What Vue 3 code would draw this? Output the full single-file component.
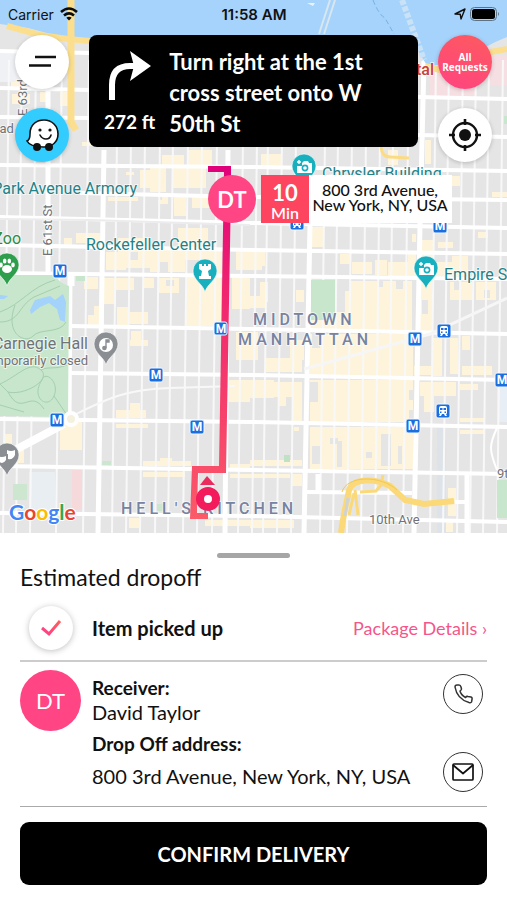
<!--
    Экран курьера: карта с маршрутом, подсказка поворота
    и нижняя панель с данными получателя
-->

<template>
  <div class="delivery-screen">
    <div class="map-area">
      <svg class="map" viewBox="0 0 507 533" preserveAspectRatio="xMidYMin slice">
        <defs>
          <linearGradient id="routeFill" x1="0" y1="0" x2="0" y2="1">
            <stop offset="0" stop-color="#e0007a" />
            <stop offset="0.35" stop-color="#f0246f" />
            <stop offset="1" stop-color="#fb5a68" />
          </linearGradient>
        </defs>

        <!-- Кварталы -->
        <rect width="507" height="533" fill="#e5e5e6" />
        <rect v-for="(b, i) in blocks" :key="'b' + i" :x="b[0]" :y="b[1]" :width="b[2]" :height="b[3]" fill="#fdf4db" />
        <rect v-for="(b, i) in shadows" :key="'s' + i" :x="b[0]" :y="b[1]" :width="b[2]" :height="b[3]" fill="#e5e5e6" />
        <rect x="0" y="52" width="26" height="30" fill="#f0f1f4" />
        <rect x="430" y="66" width="45" height="30" fill="#f6dfe2" />
        <rect x="488" y="55" width="19" height="30" fill="#f6dfe2" />
        <rect x="72" y="470" width="10" height="40" fill="#f6dadb" />
        <rect x="29" y="472" width="26" height="44" fill="#e9eef2" />
        <rect x="437" y="424" width="9" height="109" fill="#dde3e8" />
        <rect x="497" y="384" width="10" height="38" fill="#e8eef6" />

        <!-- Улицы -->
        <path :d="minorStreets" stroke="#f8f8f9" stroke-width="2" fill="none" />
        <path :d="majorStreets" stroke="#ffffff" stroke-width="5" fill="none" />
        <path :d="avenues" stroke="#ffffff" stroke-width="4" fill="none" />
        <path d="M0 219 L90 220 L250 225" stroke="#ececee" stroke-width="2" fill="none" />
        <path d="M304 369 L430 334 L507 298" stroke="#f6f6f6" stroke-width="3" fill="none" />
        <path d="M72 416 C105 400 125 389 170 388 L235 386" stroke="#f8f8f8" stroke-width="2" fill="none" />
        <path d="M0 458 L64 424" stroke="#ffffff" stroke-width="8" />
        <path d="M497 428 C489 445 489 450 497 470" stroke="#ffffff" stroke-width="2" fill="none" />

        <!-- Парки -->
        <path d="M0 275 L55 275 Q59 283 69 286 L68 417 L0 416Z" fill="#c7e6cc" />
        <g stroke="#a5cfae" fill="none">
          <path d="M0 312 C22 304 30 287 55 280 M0 322 C20 322 18 306 34 297 L60 286 M15 305 C4 335 26 344 33 336 S60 334 66 322" />
          <path d="M0 384 C18 376 30 360 41 370 S24 396 8 392 Z M41 370 C48 366 55 370 67 365 M42 380 C30 398 48 410 54 396 S45 370 42 380 M8 392 C22 418 30 388 44 409 M54 396 L67 415 M0 405 L24 412" />
        </g>
        <path d="M30 310 L35 300 L50 296 L55 300 L63 294 L66 302 L65 322 L60 320 L57 309 L49 303 L40 307 L31 314Z" fill="#a3d2fa" />
        <path d="M0 295 L8 296 L4 299 L0 299Z" fill="#a3d2fa" />
        <rect x="311" y="280" width="24" height="40" fill="#c7e6cc" />
        <rect x="76" y="276" width="9" height="5" fill="#c7e6cc" />
        <rect x="497" y="480" width="10" height="38" fill="#c7e6cc" />
        <rect x="504" y="116" width="3" height="8" fill="#c7e6cc" />
        <rect x="13" y="484" width="14" height="16" fill="#cce6cf" />
        <rect x="102" y="461" width="9" height="4" fill="#cce6cf" />
        <rect x="284" y="455" width="6" height="7" fill="#bfe2c4" />
        <rect x="157" y="504" width="6" height="7" fill="#cce6cf" />

        <!-- Вода -->
        <path d="M0 0 H507 V37 Q484 46 470 58 L428 67 L415 46 L90 42 L58 36 L28 28 L0 24Z" fill="#a5d3fb" />
        <path d="M330 0 L319 34 M335 0 L324 34" stroke="#d8e6ef" stroke-width="2" />
        <path d="M402 0 L424 60" stroke="#c9e2f6" stroke-width="6" stroke-dasharray="5 2" />
        <path d="M373 0 Q379 15 385 18 L394 34" stroke="#7ab0e2" stroke-dasharray="5 3" fill="none" />
        <path d="M307 3 L315 3 L313 6Z" fill="#edf1f3" />
        <g fill="none" stroke="#fbdf8e">
          <path d="M71 0 V122 L76 130" stroke-width="7" />
          <path d="M7 26 L40 35 L68 39 L90 41" stroke-width="6" />
          <path d="M425 66 L440 70 L480 54 L507 49" stroke-width="6" />
          <path d="M381 147 Q382 157 390 157 L409 158" stroke-width="3" stroke="#fbdc84" />
        </g>

        <!-- Развязка у тоннеля -->
        <g fill="none" stroke="#fbd978">
          <path d="M341 533 C344 510 347 502 349 490 C353 478 375 478 390 486 L405 500 L424 504 L454 501" stroke-width="6" />
          <path d="M358 515 L355 490 M349 515 L354 493 M383 475 L381 485 L376 491 L360 492" stroke-width="3" />
        </g>
        <path d="M345 516 L348 498" stroke="#d0d3d3" stroke-width="3" />
        <path d="M342 492 C347 475 381 475 397 490" stroke="#f2c850" fill="none" />
        <circle cx="71" cy="419" r="6" fill="#f5f1df" stroke="#ffffff" stroke-width="4" />

        <!-- Подписи -->
        <g class="map-text">
          <g class="place">
            <text class="edge" x="137" y="194">Park Avenue Armory</text>
            <text x="86" y="250">Rockefeller Center</text>
            <text x="322" y="179">Chrysler Building</text>
            <text x="444" y="280">Empire State Building</text>
          </g>
          <text class="zoo edge" x="21" y="244">Zoo</text>
          <text class="station edge" x="434" y="75">Hospital</text>
          <text class="hall edge" x="88" y="349">Carnegie Hall</text>
          <text class="note edge" x="88" y="365">Temporarily closed</text>
          <text class="street" x="-16" y="133">Road Ave</text>
          <text class="street" x="369" y="524">10th Ave</text>
          <text class="street" x="497" y="478">9th Ave</text>
          <text class="street" transform="translate(52 256) rotate(-90)">E 61st St</text>
          <text class="street" transform="translate(27 116) rotate(-90)">E 63rd St</text>
          <text class="district" x="253" y="325">MIDTOWN</text>
          <text class="district" x="238" y="345">MANHATTAN</text>
          <text class="district" x="121" y="514">HELL'S KITCHEN</text>
        </g>

        <!-- Станции метро и вокзалы -->
        <g v-for="(m, i) in metro" :key="'m' + i" :transform="`translate(${m[0]} ${m[1]})`">
          <rect x="-7" y="-7" width="14" height="14" rx="2" fill="#1a6fe0" stroke="#f2f6fc" />
          <text class="metro-letter" y="4">M</text>
        </g>
        <g v-for="(t, i) in trains" :key="'t' + i" :transform="`translate(${t[0]} ${t[1]})`">
          <rect x="-7" y="-7" width="14" height="14" rx="2" fill="#1a6fe0" stroke="#f2f6fc" />
          <path d="M-4 -3 Q-4 -5 -2 -5 H2 Q4 -5 4 -3 V2 Q4 3 3 3 L4 5 H2 L1 3 H-1 L-2 5 H-4 L-3 3 Q-4 3 -4 2Z" fill="#ffffff" />
          <path d="M-3 -3 H-0.5 V-1 H-3Z M0.5 -3 H3 V-1 H0.5Z M-3 0.5 H-1.5 V2 H-3Z M1.5 0.5 H3 V2 H1.5Z" fill="#1a6fe0" />
        </g>

        <!-- Метки мест -->
        <g v-for="(p, i) in pins" :key="'p' + i" :transform="`translate(${p.x} ${p.y})`">
          <path d="M0 20 C-2 12 -12 8 -12 -1 A12 12 0 0 1 12 -1 C12 8 2 12 0 20Z" :fill="p.color" stroke="#ffffff" stroke-opacity="0.6" />
          <path v-if="p.icon === 'rook'" d="M-6 -8 H-3 V-6 H-1 V-8 H1 V-6 H3 V-8 H6 V-3 L3 -1 L4 4 H6 V7 H-6 V4 H-4 L-3 -1 L-6 -3Z" fill="#ffffff" />
          <g v-else-if="p.icon === 'camera'">
            <path d="M-7 -1 H-2 V-4 L0 -6 H4 L5 -4 H8 V6 H-7Z" fill="#ffffff" />
            <circle cx="1" cy="1" r="2.6" fill="none" :stroke="p.color" stroke-width="1.6" />
            <path d="M-5 -7 V-3 M-7 -5 H-3" stroke="#ffffff" stroke-width="1.4" />
          </g>
          <g v-else-if="p.icon === 'paw'" fill="#ffffff">
            <ellipse cy="3" rx="5" ry="4" />
            <ellipse cx="-6" cy="-1" rx="1.8" ry="2.4" />
            <ellipse cx="-2.3" cy="-5" rx="1.8" ry="2.6" />
            <ellipse cx="2.3" cy="-5" rx="1.8" ry="2.6" />
            <ellipse cx="6" cy="-1" rx="1.8" ry="2.4" />
          </g>
          <g v-else-if="p.icon === 'note'">
            <circle r="7" fill="#ffffff" />
            <path d="M0 3 V-5 H3 V-3 H0" :stroke="p.color" :fill="p.color" stroke-width="1.4" />
            <circle cx="-1.600" cy="3" r="2.300" :fill="p.color" />
          </g>
          <path v-else d="M-9 0 Q-5 2 -1 0 V4 Q-5 10 -9 4Z M0 -6 Q4 -4 8 -6 V-1 Q6 4 1 3 L1 -2 H0Z" fill="#ffffff" />
        </g>

        <!-- Логотип карты -->
        <text class="map-logo" x="9" y="520"><tspan fill="#4285f4">G</tspan><tspan fill="#ea4335">o</tspan><tspan fill="#fbbc05">o</tspan><tspan fill="#4285f4">g</tspan><tspan fill="#34a853">l</tspan><tspan fill="#ea4335">e</tspan></text>

        <!-- Маршрут -->
        <path d="M208 166 H231 V190 L226 473 H198 L197 513 H208 V519 H190 L192 466 H219 L224 172 H208Z" fill="url(#routeFill)" />
        <rect x="214" y="322" width="13" height="13" rx="2" fill="#1a6fe0" stroke="#f2f6fc" />
        <text class="metro-letter" x="221" y="333">M</text>
        <path d="M200 485 L207 476 L215 485Z" fill="#e92b5e" />
        <circle cx="208" cy="499" r="8" fill="#ffffff" stroke="#f31b5b" stroke-width="8" />

        <!-- Точка доставки -->
        <circle cx="232" cy="199" r="24" fill="#ff4583" />
        <text class="pin-initials" x="232" y="208">DT</text>
        <rect x="261" y="175" width="48" height="48" fill="#fd4560" />
        <rect x="309" y="175" width="143" height="48" fill="#ffffff" />
        <text class="eta-value" x="285" y="201">10</text>
        <text class="eta-unit" x="285" y="219">Min</text>
        <text class="pin-address" x="380" y="196">800 3rd Avenue,</text>
        <text class="pin-address" x="380" y="211">New York, NY, USA</text>
      </svg>

      <div class="status-bar">
        <div class="status-left">
          <span>Carrier</span>
          <svg width="18" height="14" viewBox="0 0 18 14" fill="none" stroke="#0b0b0b" stroke-width="2.6">
            <path d="M1 5 Q9 -2 17 5" />
            <path d="M4 8.5 Q9 4.300 14 8.500" />
            <path d="M9 13.500 L6.300 10.700 Q9 8.700 11.700 10.700Z" fill="#0b0b0b" stroke="none" />
          </svg>
        </div>
        <span class="status-time">11:58 AM</span>
        <div class="status-right">
          <svg width="12" height="12" viewBox="0 0 12 12">
            <path d="M1 6 L11 1 L7 11 L6.200 6.200Z" fill="none" stroke="#111111" stroke-width="1.4" stroke-linejoin="round" />
          </svg>
          <svg width="30" height="14" viewBox="0 0 30 14">
            <rect x="0.5" y="0.500" width="26" height="13" rx="4" fill="none" stroke="#5c7285" />
            <rect x="2" y="2" width="23" height="10" rx="2.500" fill="#000000" />
            <path d="M28 5 Q30 7 28 9Z" fill="#5c7285" />
          </svg>
        </div>
      </div>

      <div class="map-controls">
        <div class="control-column">
          <button class="round-button" aria-label="Menu">
            <svg width="54" height="54" viewBox="0 0 54 54" stroke="#111111" stroke-width="2.600">
              <path d="M20 22 H41 M14 30.500 H36" />
            </svg>
          </button>
          <button class="round-button waze" aria-label="Waze">
            <svg width="54" height="54" viewBox="0 0 54 54">
              <path d="M12 33 Q15 32 15 26 C15 16 22 12 29 12 C37 12 43 18 43 26 C43 34 37 39 29 39 C20 39 14 37 12 33Z" fill="#ffffff" stroke="#111111" stroke-width="1.600" />
              <circle cx="22" cy="39" r="4" fill="#111111" />
              <circle cx="34" cy="39" r="4" fill="#111111" />
              <circle cx="25" cy="22" r="1.600" fill="#111111" />
              <circle cx="35" cy="22" r="1.600" fill="#111111" />
              <path d="M25 27 Q27 31 31 31 Q35 31 36 27" fill="none" stroke="#111111" stroke-width="1.600" stroke-linecap="round" />
            </svg>
          </button>
        </div>

        <div class="turn-card">
          <div class="turn-side">
            <svg width="48" height="56" viewBox="0 0 48 56">
              <path d="M6 52 V37 Q6 18 24 18 H32" fill="none" stroke="#ffffff" stroke-width="6" />
              <path d="M24 3 L45 18 L24 33 L28 18Z" fill="#ffffff" />
            </svg>
            <span class="turn-distance">272 ft</span>
          </div>
          <p class="turn-text">Turn right at the 1st cross street onto W 50th St</p>
        </div>

        <div class="control-column">
          <button class="round-button requests">All<br />Requests</button>
          <button class="round-button" aria-label="My location">
            <svg width="54" height="54" viewBox="0 0 54 54">
              <circle cx="27" cy="27" r="12" fill="none" stroke="#111111" stroke-width="2.400" />
              <circle cx="27" cy="27" r="6" fill="#111111" />
              <path d="M27 11 V17 M27 37 V43 M11 27 H17 M37 27 H43" stroke="#111111" stroke-width="2.600" />
            </svg>
          </button>
        </div>
      </div>
    </div>

    <!-- Нижняя панель -->
    <div class="sheet">
      <div class="sheet-handle"></div>
      <h2 class="sheet-title">Estimated dropoff</h2>

      <div class="status-row">
        <div class="check-circle">
          <svg width="22" height="18" viewBox="0 0 22 18">
            <defs>
              <linearGradient id="checkFill" x1="0" y1="1" x2="1" y2="0">
                <stop offset="0" stop-color="#ff3d8b" />
                <stop offset="1" stop-color="#fd5f5b" />
              </linearGradient>
            </defs>
            <path d="M2 9 L9 15 L20 2" fill="none" stroke="url(#checkFill)" stroke-width="3" />
          </svg>
        </div>
        <span class="status-name">Item picked up</span>
        <a class="details-link" href="#">Package Details ›</a>
      </div>

      <div class="receiver-block">
        <div class="avatar">DT</div>
        <div class="receiver-info">
          <span class="info-label">Receiver:</span>
          <span class="info-value">David Taylor</span>
          <span class="info-label address-label">Drop Off address:</span>
          <span class="info-value address-value">800 3rd Avenue, New York, NY, USA</span>
        </div>
        <div class="contact-column">
          <button class="contact-button" aria-label="Call">
            <svg width="40" height="40" viewBox="0 0 40 40" fill="none" stroke="#333333" stroke-width="1.500" stroke-linejoin="round">
              <path d="M12 13 Q12 11 14 11 H16 Q17.500 11 18 13 L18.500 15 Q18.500 16 17 17 Q18 21 22.500 23.500 Q23.500 22 25 22.500 L28 23 Q29.500 23.500 29 25.500 L28.500 28 Q28 29 26 28.500 Q14 25 12 13Z" />
            </svg>
          </button>
          <button class="contact-button mail" aria-label="Message">
            <svg width="40" height="40" viewBox="0 0 40 40" fill="none" stroke="#111111" stroke-width="1.700" stroke-linejoin="round">
              <rect x="10" y="12" width="20" height="16" rx="1" />
              <path d="M10 13 L20 21.500 L30 13" />
            </svg>
          </button>
        </div>
      </div>

      <button class="confirm-button">CONFIRM DELIVERY</button>
    </div>
  </div>
</template>

<script setup>
// Жёлтые участки застройки: x, y, ширина, высота
const blocks = [
  [11, 80, 16, 7], [12, 94, 18, 10], [40, 92, 10, 10], [60, 92, 8, 14], [82, 142, 10, 4],
  [162, 155, 22, 10], [188, 150, 24, 16], [126, 172, 8, 3], [140, 170, 26, 18], [150, 165, 16, 27], [172, 168, 34, 20],
  [108, 197, 30, 4], [158, 196, 10, 8], [174, 196, 12, 20], [192, 196, 22, 12],
  [64, 238, 8, 10], [76, 233, 24, 10], [106, 252, 20, 18], [118, 238, 32, 30], [150, 250, 35, 22],
  [178, 228, 30, 32], [206, 250, 16, 24], [84, 277, 14, 12], [102, 278, 14, 26], [116, 278, 18, 12],
  [144, 278, 10, 10], [159, 278, 20, 15], [88, 315, 16, 10], [94, 306, 8, 18], [117, 307, 12, 18], [128, 312, 20, 12],
  [186, 277, 35, 49], [232, 277, 18, 32], [236, 252, 26, 18], [131, 331, 10, 15], [130, 340, 18, 6],
  [236, 332, 22, 28], [228, 380, 22, 22], [250, 380, 24, 18], [116, 410, 30, 8], [130, 403, 10, 15], [116, 424, 32, 4],
  [60, 422, 22, 28], [4, 434, 8, 10], [18, 446, 6, 17], [143, 461, 48, 5], [160, 458, 12, 8], [143, 472, 42, 5],
  [129, 518, 10, 10], [205, 520, 55, 6], [230, 464, 20, 6], [230, 474, 24, 4],
  [261, 154, 20, 12], [388, 150, 10, 15], [425, 140, 6, 24], [446, 176, 14, 10], [492, 192, 15, 5],
  [312, 227, 12, 20], [412, 234, 4, 8], [438, 242, 15, 6], [478, 232, 10, 6], [255, 252, 10, 14], [340, 254, 10, 10],
  [352, 262, 20, 12], [375, 260, 12, 15], [388, 262, 24, 14], [408, 254, 8, 22], [422, 240, 12, 20], [420, 262, 40, 14], [452, 256, 16, 20],
  [345, 281, 67, 49], [420, 281, 12, 50], [296, 290, 8, 12], [260, 282, 8, 20], [450, 282, 22, 18], [476, 282, 20, 18], [250, 296, 16, 12],
  [310, 312, 36, 18], [310, 334, 103, 42], [266, 358, 36, 14], [290, 340, 14, 20], [432, 338, 10, 38], [450, 338, 8, 36], [462, 336, 8, 14], [462, 366, 30, 9],
  [266, 382, 36, 15], [278, 382, 8, 24], [292, 382, 10, 40], [310, 380, 103, 42], [420, 382, 36, 14], [424, 396, 10, 16], [460, 384, 18, 6],
  [310, 427, 103, 42], [294, 427, 5, 4], [460, 418, 24, 4], [460, 430, 24, 4], [250, 460, 52, 6], [250, 474, 40, 4], [292, 474, 10, 12],
  [250, 520, 44, 8], [448, 488, 8, 28], [438, 522, 15, 10], [414, 366, 20, 9],
]

// Серые вырезы внутри жёлтых участков
const shadows = [
  [158, 196, 4, 4], [130, 252, 8, 8], [160, 262, 8, 10], [166, 280, 8, 6], [345, 281, 6, 10], [378, 281, 5, 6], [396, 281, 7, 8],
  [312, 334, 8, 14], [346, 334, 4, 8], [310, 382, 8, 20], [409, 390, 5, 10], [409, 410, 5, 12],
  [337, 441, 5, 26], [381, 434, 10, 32], [312, 446, 8, 18], [330, 438, 8, 6], [398, 446, 4, 18], [366, 452, 6, 6],
  [454, 282, 6, 8], [484, 290, 6, 8], [422, 300, 6, 14],
]

const minorX = [
  3, 16, 30, 56, 83, 112, 126, 140, 155, 168, 183, 197, 212, 238, 252, 263, 277, 291,
  320, 333, 347, 361, 375, 388, 403, 430, 443, 457, 470, 483, 497,
]
const minorStreets = minorX.map((x) => `M${x} 533 L${x + 6} 60`).join(' ')

const majorStreets = [
  'M98 533 L104 150', 'M70 275 L69 420', 'M48 60 L48 275', 'M225 533 L228 150',
  'M304 533 L310 225', 'M414 533 L420 225 L424 60', 'M467 472 V533', 'M318 474 V492', 'M72 275 V286',
].join(' ')

const avenues = [
  'M0 51 L90 53', 'M418 97 L507 99', 'M0 88 L90 90', 'M418 135 L507 137', 'M0 117 L90 118',
  'M0 165 L250 167 L507 171', 'M80 193 L250 197 L507 200', 'M0 217 L250 223 L507 228',
  'M0 245 L250 250 L507 254', 'M0 273 L250 276 L507 279', 'M70 326 L250 329 L507 334',
  'M70 373 L250 375 L507 380', 'M0 419 L250 422 L507 427', 'M0 466 L250 470 L507 474',
  'M0 513 L250 516 L507 522', 'M305 492 L412 493', 'M455 502 H466',
].join(' ')

const metro = [
  [60, 271], [156, 375], [197, 427], [57, 420], [440, 226], [415, 339], [413, 426], [502, 380],
]
const trains = [[444, 331], [443, 411], [297, 223]]

const pins = [
  { x: 205, y: 272, color: '#18afbf', icon: 'rook' },
  { x: 426, y: 269, color: '#18afbf', icon: 'camera' },
  { x: 304, y: 167, color: '#18afbf', icon: 'camera' },
  { x: 7, y: 266, color: '#2e9e4c', icon: 'paw' },
  { x: 106, y: 345, color: '#8b8f94', icon: 'note' },
  { x: 7, y: 456, color: '#8b8f94', icon: 'masks' },
]
</script>

<style>
body {
  margin: 0;
  background: #ffffff;
}
</style>

<style scoped>
.delivery-screen {
  display: flex;
  flex-direction: column;
  min-height: 100vh;
  font-family: Lato, 'Open Sans', sans-serif;
  color: #111111;
  background: #ffffff;
}

button {
  padding: 0;
  border: none;
  font-family: inherit;
  cursor: pointer;
}

/* Карта */
.map-area {
  position: relative;
  flex: 1;
  min-height: 360px;
  overflow: hidden;
}

.map {
  position: absolute;
  inset: 0;
  width: 100%;
  height: 100%;
}

.map-text {
  font-family: Roboto, sans-serif;
  font-size: 16px;
  paint-order: stroke;
  stroke: #ffffff;
  stroke-opacity: 0.6;
  stroke-width: 2px;
}

.edge {
  text-anchor: end;
}

.place {
  fill: #1f8288;
}

.zoo {
  fill: #2e8b45;
}

.station {
  font-weight: 500;
  fill: #c9403e;
}

.hall {
  fill: #707276;
}

.note,
.street {
  font-size: 13px;
  fill: #707276;
}

.district {
  font-weight: 500;
  letter-spacing: 4px;
  fill: #7783a0;
}

.metro-letter {
  font-family: Roboto, sans-serif;
  font-size: 12px;
  font-weight: 700;
  text-anchor: middle;
  fill: #ffffff;
}

.map-logo {
  font-family: Lato, sans-serif;
  font-size: 21px;
  font-weight: 700;
  paint-order: stroke;
  stroke: #ffffff;
  stroke-width: 2px;
}

.pin-initials {
  font-size: 22px;
  font-weight: 700;
  text-anchor: middle;
  fill: #ffffff;
}

.eta-value {
  font-size: 22px;
  font-weight: 700;
  text-anchor: middle;
  fill: #ffffff;
}

.eta-unit {
  font-size: 16px;
  font-weight: 600;
  text-anchor: middle;
  fill: #ffffff;
}

.pin-address {
  font-size: 16px;
  font-weight: 500;
  text-anchor: middle;
  fill: #111111;
}

/* Строка состояния */
.status-bar {
  position: relative;
  display: grid;
  grid-template-columns: 1fr auto 1fr;
  align-items: center;
  height: 28px;
  padding: 0 7px 0 8px;
  font-family: Inter, sans-serif;
  font-size: 14px;
}

.status-left,
.status-right {
  display: flex;
  align-items: center;
  gap: 6px;
}

.status-right {
  justify-content: flex-end;
  gap: 4px;
}

.status-time {
  font-size: 15px;
  font-weight: 600;
}

/* Кнопки поверх карты */
.map-controls {
  position: relative;
  display: flex;
  align-items: flex-start;
  gap: 20px;
  padding: 7px 15px 0;
}

.control-column {
  display: flex;
  flex-direction: column;
  gap: 19px;
}

.round-button {
  width: 54px;
  height: 54px;
  border-radius: 50%;
  background: #ffffff;
  box-shadow: 0 1px 4px rgba(0, 0, 0, 0.2);
}

.round-button svg {
  display: block;
}

.waze {
  background: #33ccff;
}

.requests {
  background: linear-gradient(200deg, #fd5a5f, #ff4480);
  color: #ffffff;
  font-family: 'Open Sans', sans-serif;
  font-size: 10px;
  font-weight: 700;
  line-height: 10px;
}

.turn-card {
  flex: 1;
  display: flex;
  align-items: center;
  gap: 14px;
  min-height: 112px;
  padding: 0 10px 0 15px;
  border-radius: 8px;
  box-sizing: border-box;
  background: #000000;
  color: #ffffff;
}

.turn-side {
  display: flex;
  flex-direction: column;
  align-items: center;
  gap: 6px;
}

.turn-distance {
  font-size: 19px;
  font-weight: 700;
  line-height: 24px;
  white-space: nowrap;
}

.turn-text {
  margin: 0;
  padding-top: 3px;
  font-size: 22px;
  font-weight: 700;
  line-height: 31px;
}

/* Нижняя панель */
.sheet {
  display: flex;
  flex-direction: column;
  padding: 20px 20px 15px;
  background: #ffffff;
}

.sheet-handle {
  align-self: center;
  width: 73px;
  height: 5px;
  border-radius: 3px;
  background: #a6a6a6;
}

.sheet-title {
  margin: 6px 0 16px;
  font-size: 23px;
  font-weight: 400;
  line-height: 26px;
}

.status-row {
  display: flex;
  align-items: center;
  padding: 0 0 10px 9px;
  border-bottom: 2px solid #cccccc;
}

.check-circle {
  display: flex;
  align-items: center;
  justify-content: center;
  width: 44px;
  height: 44px;
  border-radius: 50%;
  box-shadow: 0 1px 6px rgba(0, 0, 0, 0.25);
}

.status-name {
  flex: 1;
  padding-left: 19px;
  font-size: 20px;
  font-weight: 700;
}

.details-link {
  color: #f4568a;
  font-size: 18px;
  text-decoration: none;
}

.receiver-block {
  display: flex;
  align-items: flex-start;
  gap: 11px;
  padding: 8px 4px 14px 0;
  border-bottom: 1px solid #aaaaaa;
}

.avatar {
  display: flex;
  align-items: center;
  justify-content: center;
  flex-shrink: 0;
  width: 61px;
  height: 61px;
  border-radius: 50%;
  background: #ff4583;
  color: #ffffff;
  font-size: 22px;
}

.receiver-info {
  flex: 1;
  display: flex;
  flex-direction: column;
  padding-top: 6px;
}

.info-label,
.info-value {
  font-size: 20px;
  line-height: 24px;
}

.info-label {
  font-size: 19px;
  font-weight: 700;
}

.address-label,
.address-value {
  margin-top: 8px;
}

.contact-column {
  display: flex;
  flex-direction: column;
  gap: 38px;
  padding-top: 4px;
}

.contact-button {
  width: 40px;
  height: 40px;
  border: 1px solid #333333;
  border-radius: 50%;
  background: #ffffff;
}

.contact-button svg {
  display: block;
  margin: -1px;
}

.confirm-button {
  height: 63px;
  margin-top: 15px;
  border-radius: 9px;
  background: #000000;
  color: #ffffff;
  font-size: 20px;
  font-weight: 700;
}
</style>
